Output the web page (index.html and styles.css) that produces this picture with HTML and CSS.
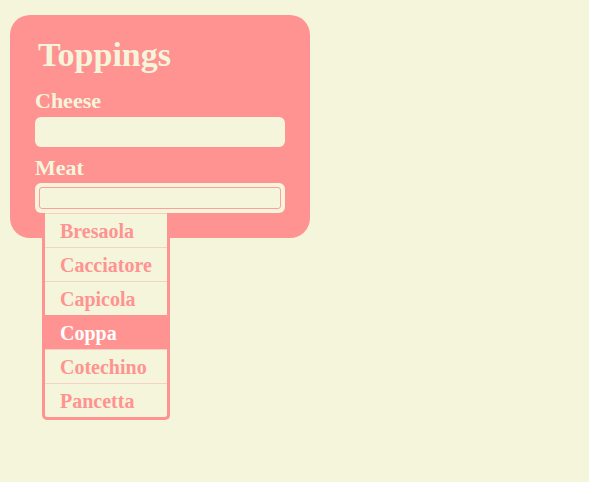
FILE: index.html
```html
<!DOCTYPE html>
<html>
<head>
<meta charset="utf-8">
<link rel="stylesheet" href="styles.css">
</head>
<body>
<div class="card">
  <h1 class="title">Toppings</h1>
  <label class="label label-cheese">Cheese</label>
  <div class="field"></div>
  <label class="label label-meat">Meat</label>
  <div class="field field-focus">
    <div class="field-inner"></div>
    <ul class="menu">
      <li class="item">Bresaola</li>
      <li class="item">Cacciatore</li>
      <li class="item">Capicola</li>
      <li class="item item-active">Coppa</li>
      <li class="item">Cotechino</li>
      <li class="item">Pancetta</li>
    </ul>
  </div>
</div>
</body>
</html>
```
FILE: styles.css
```css
html, body {
  margin: 0;
  padding: 0;
}
body {
  background: #f5f5dc;
  font-family: "Liberation Serif", "Times New Roman", serif;
  font-weight: bold;
  padding: 15px 0 0 10px;
  width: 589px;
  height: 482px;
  box-sizing: border-box;
}
.card {
  width: 300px;
  height: 223px;
  box-sizing: border-box;
  background: #ff9391;
  border-radius: 20px;
  padding: 20px 25px 0 25px;
  display: flex;
  flex-direction: column;
}
.title {
  margin: 0 0 14px 3px;
  font-size: 34px;
  line-height: 40px;
  color: #f5f5dc;
}
.label {
  display: block;
  font-size: 22px;
  line-height: 24px;
  color: #f5f5dc;
}
.label-cheese {
  margin-bottom: 4px;
}
.label-meat {
  margin-top: 9px;
  margin-bottom: 3px;
}
.field {
  height: 30px;
  width: 250px;
  box-sizing: border-box;
  background: #f5f5dc;
  border-radius: 6px;
}
.field-focus {
  position: relative;
  padding: 4px;
}
.field-inner {
  height: 100%;
  box-sizing: border-box;
  border: 1px solid #ff9f9c;
  border-radius: 3px;
}
.menu {
  position: absolute;
  left: 7px;
  top: 100%;
  margin: 0;
  padding: 0;
  list-style: none;
  width: 128px;
  box-sizing: border-box;
  border: 3px solid #ff9391;
  border-top: 0;
  border-radius: 0 0 5px 5px;
  background: #f5f5dc;
}
.item {
  height: 34px;
  box-sizing: border-box;
  border-top: 1px solid #f6d0c4;
  padding: 1px 0 0 15px;
  font-size: 20px;
  line-height: 33px;
  color: #ff9391;
}
.item-active {
  background: #ff9391;
  border-top-color: #ff9391;
  color: #ffffff;
}
```
